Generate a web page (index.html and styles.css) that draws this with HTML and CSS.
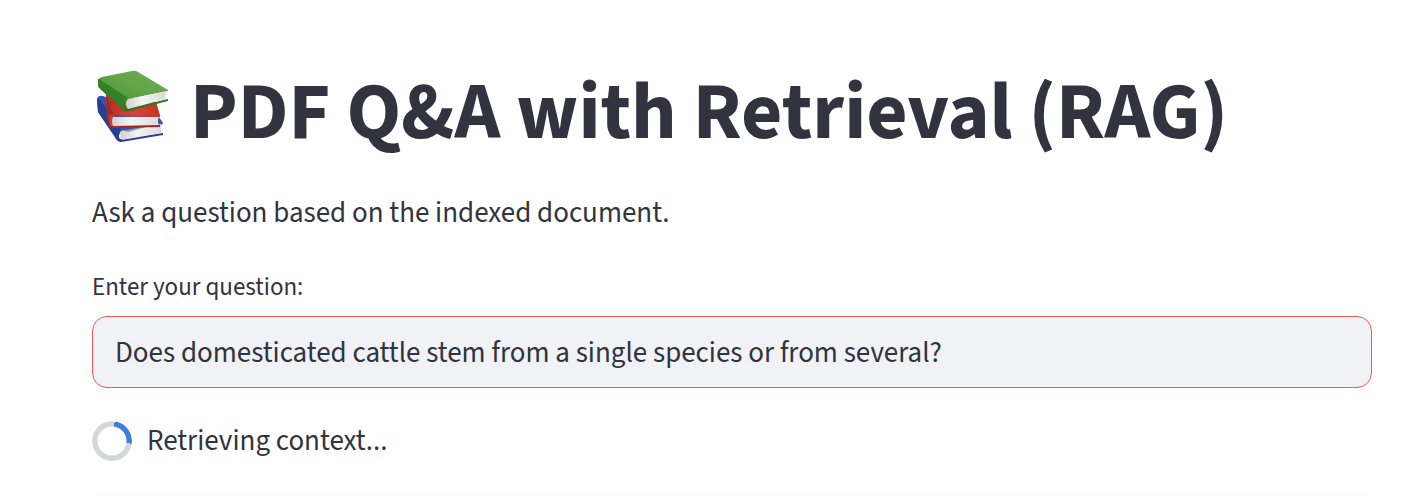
FILE: index.html
```
<!DOCTYPE html>
<html lang="en">
<head>
<meta charset="utf-8">
<title>PDF Q&amp;A with Retrieval (RAG)</title>
<link rel="stylesheet" href="styles.css">
</head>
<body>
<main class="app">
  <h1 class="title">
    <svg class="books" viewBox="0 0 100 90" role="img" aria-label="Books">
      <defs>
        <linearGradient id="green" x1="0" y1="1" x2="1" y2="0"><stop offset="0" stop-color="#3f8f30"/><stop offset=".5" stop-color="#62a448"/><stop offset="1" stop-color="#6fae58"/></linearGradient>
        <linearGradient id="red" x1="0" y1="0" x2="1" y2="0"><stop offset="0" stop-color="#b52c22"/><stop offset=".5" stop-color="#d94534"/><stop offset="1" stop-color="#c13426"/></linearGradient>
        <linearGradient id="pages" x1="0" y1="0" x2="1" y2="0"><stop offset="0" stop-color="#d0d0d0"/><stop offset=".4" stop-color="#f3f3f2"/><stop offset="1" stop-color="#dadada"/></linearGradient>
      </defs>
      <path fill="#3455b4" d="M11 39Q12 35 17 36L73 57 77 63 76 65 35 71 31 80 12 52Z"/>
      <path fill="#263f93" d="M11 40Q12 37 16 42L35 70Q31 74 34 79L77 73V75L35 82Q31 82 29 77L12 52Z"/>
      <path fill="url(#pages)" d="M35 71 76 64Q74 68 76 73L36 80Q33 76 35 71Z"/>
      <path fill="#57637e" opacity=".6" d="M36 70 72 65 60 67 42 72Z"/>
      <path fill="url(#red)" d="M20 33 70 42 74 55V57L28 56 24 66 21 58Z"/>
      <path fill="#a42820" d="M20 35 27 54Q23 60 26 65L74 65V67L28 68Q22 68 22 60Z"/>
      <path fill="#cf3b2e" d="M23 54 28 56Q25 60 28 66L24 66Z"/>
      <path fill="url(#pages)" d="M27 57H73Q71 61 73 65L27 66Q25 61 27 57Z"/>
      <path fill="url(#green)" d="M12 21Q12 18 16 17L46 11Q49 10 52 12L82 30V31L43 39 37 44 12 27Z"/>
      <path fill="#2e7124" d="M12 20Q12 18 17 22L40 37Q36 44 41 49L82 39V41L43 51Q38 52 36 49L14 28Q12 26 12 20Z"/>
      <path fill="url(#pages)" d="M42 39 81 31Q78 35 80 39L42 49Q38 44 42 39Z"/>
      <path fill="#347f29" d="M12 19 42 38Q37 43 39 51L14 29Q12 26 12 19Z"/>
    </svg>
    <span>PDF Q&amp;A with Retrieval (RAG)</span>
  </h1>
  <p class="intro">Ask a question based on the indexed document.</p>
  <form class="question">
    <label class="label" for="question">Enter your question:</label>
    <input class="input" id="question" type="text" value="Does domesticated cattle stem from a single species or from several?">
  </form>
  <div class="status" role="status">
    <span class="spinner"></span>
    <span>Retrieving context...</span>
  </div>
  <div class="result"></div>
</main>
</body>
</html>
```
FILE: styles.css
```
* { box-sizing: border-box; }

body {
  margin: 0;
  background: #fff;
  color: #31333f;
  font-family: "Source Sans 3", "Noto Sans CJK SC", sans-serif;
  font-size: 29px;
  line-height: 40px;
}

.app {
  display: flex;
  flex-direction: column;
  min-height: 100vh;
  padding: 60px 50px 0 92px;
}

.title {
  display: flex;
  align-items: flex-start;
  gap: 4px;
  margin: 0;
  font-size: 80px;
  font-weight: 700;
  line-height: 106px;
  white-space: nowrap;
}

.books {
  flex: none;
  width: 100px;
  height: 90px;
  margin-left: -6px;
}

.intro { margin: 27px 0 0; }

.question {
  display: flex;
  flex-direction: column;
  margin-top: 34px;
}

.label {
  font-size: 25px;
  line-height: 40px;
}

.input {
  width: 100%;
  height: 72px;
  margin-top: 9px;
  padding: 2px 22px 0;
  border: 1px solid #ee5a54;
  border-radius: 15px;
  outline: none;
  background: #f0f2f6;
  color: inherit;
  font: inherit;
}

.status {
  display: flex;
  align-items: center;
  gap: 15px;
  margin-top: 33px;
}

.spinner {
  width: 40px;
  height: 40px;
  border-radius: 50%;
  background: conic-gradient(#d5d6d8 0deg 8deg, #3c7fdd 8deg 98deg, #d5d6d8 98deg);
  -webkit-mask: radial-gradient(circle, transparent 14px, #000 15px);
  mask: radial-gradient(circle, transparent 14px, #000 15px);
}

.result {
  flex: 1;
  min-height: 2px;
  margin: 32px 6px 0;
  background: #fafcfb;
}
```
